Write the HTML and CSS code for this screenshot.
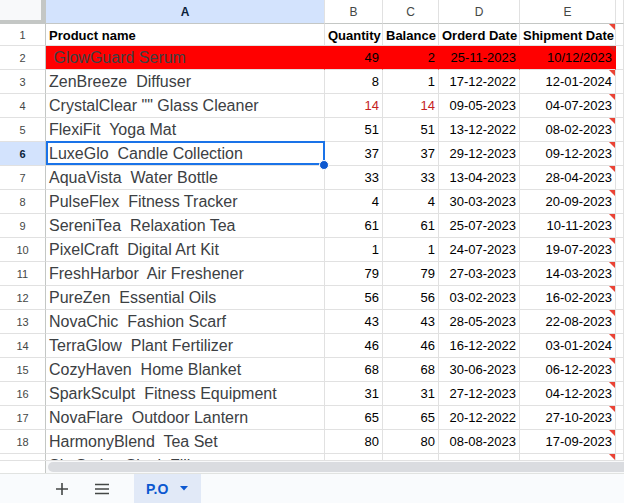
FILE: index.html
```html
<!DOCTYPE html>
<html>
<head>
<meta charset="utf-8">
<link rel="stylesheet" href="styles.css">
</head>
<body>
<div class="app">
  <div class="sheet">
    <div class="grid">
      <div class="corner"></div>
      <div class="colh sel-h">A</div>
      <div class="colh">B</div>
      <div class="colh">C</div>
      <div class="colh">D</div>
      <div class="colh">E</div>
      <div class="colh"></div>

      <div class="rowh">1</div>
      <div class="c hd">Product name</div>
      <div class="c hd">Quantity</div>
      <div class="c hd">Balance</div>
      <div class="c hd">Orderd Date</div>
      <div class="c hd note">Shipment Date</div>
      <div class="c"></div>

      <div class="rowh">2</div>
      <div class="c name red"> GlowGuard Serum</div>
      <div class="c num red">49</div>
      <div class="c num red">2</div>
      <div class="c num red">25-11-2023</div>
      <div class="c num red note">10/12/2023</div>
      <div class="c"></div>

      <div class="rowh">3</div>
      <div class="c name">ZenBreeze  Diffuser</div>
      <div class="c num">8</div>
      <div class="c num">1</div>
      <div class="c num">17-12-2022</div>
      <div class="c num note">12-01-2024</div>
      <div class="c"></div>

      <div class="rowh">4</div>
      <div class="c name">CrystalClear "" Glass Cleaner</div>
      <div class="c num warn">14</div>
      <div class="c num warn">14</div>
      <div class="c num">09-05-2023</div>
      <div class="c num note">04-07-2023</div>
      <div class="c"></div>

      <div class="rowh">5</div>
      <div class="c name">FlexiFit  Yoga Mat</div>
      <div class="c num">51</div>
      <div class="c num">51</div>
      <div class="c num">13-12-2022</div>
      <div class="c num note">08-02-2023</div>
      <div class="c"></div>

      <div class="rowh sel-h">6</div>
      <div class="c name selected">LuxeGlo  Candle Collection</div>
      <div class="c num">37</div>
      <div class="c num">37</div>
      <div class="c num">29-12-2023</div>
      <div class="c num note">09-12-2023</div>
      <div class="c"></div>

      <div class="rowh">7</div>
      <div class="c name">AquaVista  Water Bottle</div>
      <div class="c num">33</div>
      <div class="c num">33</div>
      <div class="c num">13-04-2023</div>
      <div class="c num note">28-04-2023</div>
      <div class="c"></div>

      <div class="rowh">8</div>
      <div class="c name">PulseFlex  Fitness Tracker</div>
      <div class="c num">4</div>
      <div class="c num">4</div>
      <div class="c num">30-03-2023</div>
      <div class="c num note">20-09-2023</div>
      <div class="c"></div>

      <div class="rowh">9</div>
      <div class="c name">SereniTea  Relaxation Tea</div>
      <div class="c num">61</div>
      <div class="c num">61</div>
      <div class="c num">25-07-2023</div>
      <div class="c num note">10-11-2023</div>
      <div class="c"></div>

      <div class="rowh">10</div>
      <div class="c name">PixelCraft  Digital Art Kit</div>
      <div class="c num">1</div>
      <div class="c num">1</div>
      <div class="c num">24-07-2023</div>
      <div class="c num note">19-07-2023</div>
      <div class="c"></div>

      <div class="rowh">11</div>
      <div class="c name">FreshHarbor  Air Freshener</div>
      <div class="c num">79</div>
      <div class="c num">79</div>
      <div class="c num">27-03-2023</div>
      <div class="c num note">14-03-2023</div>
      <div class="c"></div>

      <div class="rowh">12</div>
      <div class="c name">PureZen  Essential Oils</div>
      <div class="c num">56</div>
      <div class="c num">56</div>
      <div class="c num">03-02-2023</div>
      <div class="c num note">16-02-2023</div>
      <div class="c"></div>

      <div class="rowh">13</div>
      <div class="c name">NovaChic  Fashion Scarf</div>
      <div class="c num">43</div>
      <div class="c num">43</div>
      <div class="c num">28-05-2023</div>
      <div class="c num note">22-08-2023</div>
      <div class="c"></div>

      <div class="rowh">14</div>
      <div class="c name">TerraGlow  Plant Fertilizer</div>
      <div class="c num">46</div>
      <div class="c num">46</div>
      <div class="c num">16-12-2022</div>
      <div class="c num note">03-01-2024</div>
      <div class="c"></div>

      <div class="rowh">15</div>
      <div class="c name">CozyHaven  Home Blanket</div>
      <div class="c num">68</div>
      <div class="c num">68</div>
      <div class="c num">30-06-2023</div>
      <div class="c num note">06-12-2023</div>
      <div class="c"></div>

      <div class="rowh">16</div>
      <div class="c name">SparkSculpt  Fitness Equipment</div>
      <div class="c num">31</div>
      <div class="c num">31</div>
      <div class="c num">27-12-2023</div>
      <div class="c num note">04-12-2023</div>
      <div class="c"></div>

      <div class="rowh">17</div>
      <div class="c name">NovaFlare  Outdoor Lantern</div>
      <div class="c num">65</div>
      <div class="c num">65</div>
      <div class="c num">20-12-2022</div>
      <div class="c num note">27-10-2023</div>
      <div class="c"></div>

      <div class="rowh">18</div>
      <div class="c name">HarmonyBlend  Tea Set</div>
      <div class="c num">80</div>
      <div class="c num">80</div>
      <div class="c num">08-08-2023</div>
      <div class="c num note">17-09-2023</div>
      <div class="c"></div>

      <div class="rowh"></div>
      <div class="c name">SkyScript  Sleek Filler</div>
      <div class="c num"></div>
      <div class="c num"></div>
      <div class="c num"></div>
      <div class="c num note"></div>
      <div class="c"></div>
    </div>
  </div>

  <div class="hscroll">
    <div class="hs-left"></div>
    <div class="hs-track"><div class="hs-thumb"></div></div>
  </div>

  <div class="tabbar">
    <div class="tb-btn">
      <svg width="14" height="14" viewBox="0 0 14 14"><path d="M7 1v12M1 7h12" stroke="#444746" stroke-width="1.6" fill="none"/></svg>
    </div>
    <div class="tb-btn">
      <svg width="16" height="12" viewBox="0 0 16 12"><path d="M1 1.5h14M1 6h14M1 10.5h14" stroke="#444746" stroke-width="1.6" fill="none"/></svg>
    </div>
    <div class="tab">
      <span class="tab-name">P.O</span>
      <svg width="8" height="5" viewBox="0 0 8 5"><path d="M0 0h8L4 4.5z" fill="#0b57d0"/></svg>
    </div>
  </div>
</div>
</body>
</html>
```

FILE: styles.css
```css
html, body {
  margin: 0;
  padding: 0;
  background: #ffffff;
}
body {
  width: 624px;
  height: 503px;
  overflow: hidden;
  font-family: "Liberation Sans", Arial, sans-serif;
}
.app {
  display: flex;
  flex-direction: column;
  height: 503px;
}
.sheet {
  height: 460px;
  overflow: hidden;
  flex: none;
}
.grid {
  display: grid;
  grid-template-columns: 46px 279px 58px 56px 81px 96px 1fr;
  grid-template-rows: 24px 22px repeat(18, 24px);
}
.grid > div {
  box-sizing: border-box;
  border-right: 1px solid #e1e1e1;
  border-bottom: 1px solid #e1e1e1;
  white-space: pre;
  overflow: visible;
  display: flex;
  align-items: center;
  min-width: 0;
}
.grid > .corner {
  background: #f8f9fa;
  border-right: 5px solid #c4c7c5;
  border-bottom: 4px solid #c4c7c5;
}
.grid > .colh {
  justify-content: center;
  font-size: 12px;
  color: #444746;
  border-bottom: 1px solid #c4c7c5;
  background: #ffffff;
}
.grid > .rowh {
  justify-content: center;
  font-size: 11px;
  color: #444746;
  border-right: 1px solid #c4c7c5;
  background: #ffffff;
}
.grid > .sel-h {
  background: #d3e3fd;
  color: #0b1f3a;
  font-weight: 700;
}
.grid > .c {
  padding: 0 3px;
  font-size: 13px;
  color: #000000;
  position: relative;
}
.grid > .hd {
  font-weight: 700;
  padding-top: 1px;
}
.grid > .name {
  font-size: 16px;
  color: #3c4043;
}
.grid > .num {
  justify-content: flex-end;
}
.grid > .warn {
  color: #c5221f;
}
.grid > .red {
  background: #ff0000;
  border-right-color: #ff0000;
}
.grid > .name.red {
  color: #3c4043;
}
.note::after {
  content: "";
  position: absolute;
  top: 0;
  right: 0;
  width: 0;
  height: 0;
  border-left: 6px solid transparent;
  border-top: 6px solid #ea4335;
}
.red.note::after {
  border-top-color: #c5221f;
}
.grid > .selected {
  z-index: 2;
}
.selected::before {
  content: "";
  position: absolute;
  top: -1px;
  left: 0;
  right: -1px;
  bottom: 0;
  border: 2px solid #1a73e8;
  pointer-events: none;
}
.selected::after {
  content: "";
  position: absolute;
  right: -5px;
  bottom: -5px;
  width: 8px;
  height: 8px;
  border-radius: 50%;
  background: #0b57d0;
  border: 1px solid #ffffff;
}
.hscroll {
  display: flex;
  height: 13px;
  flex: none;
  border-top: 1px solid #e1e1e1;
  box-sizing: border-box;
}
.hs-left {
  width: 46px;
  border-right: 1px solid #c4c7c5;
  box-sizing: border-box;
  background: #ffffff;
}
.hs-track {
  flex: 1;
  display: flex;
  align-items: center;
  padding-left: 2px;
  background: #f8f9fa;
}
.hs-thumb {
  flex: 1;
  height: 10px;
  border-radius: 5px 0 0 5px;
  background: #dadce0;
}
.tabbar {
  flex: 1;
  display: flex;
  align-items: stretch;
  background: #f9fbfd;
  border-top: 1px solid #e1e3e1;
  padding-left: 42px;
}
.tb-btn {
  width: 40px;
  display: flex;
  align-items: center;
  justify-content: center;
}
.tab {
  margin-left: 12px;
  width: 67px;
  box-sizing: border-box;
  padding: 0 13px 0 12px;
  display: flex;
  align-items: center;
  justify-content: space-between;
  background: #e1e9f7;
}
.tab-name {
  font-size: 14px;
  font-weight: 700;
  color: #0b57d0;
}
```
